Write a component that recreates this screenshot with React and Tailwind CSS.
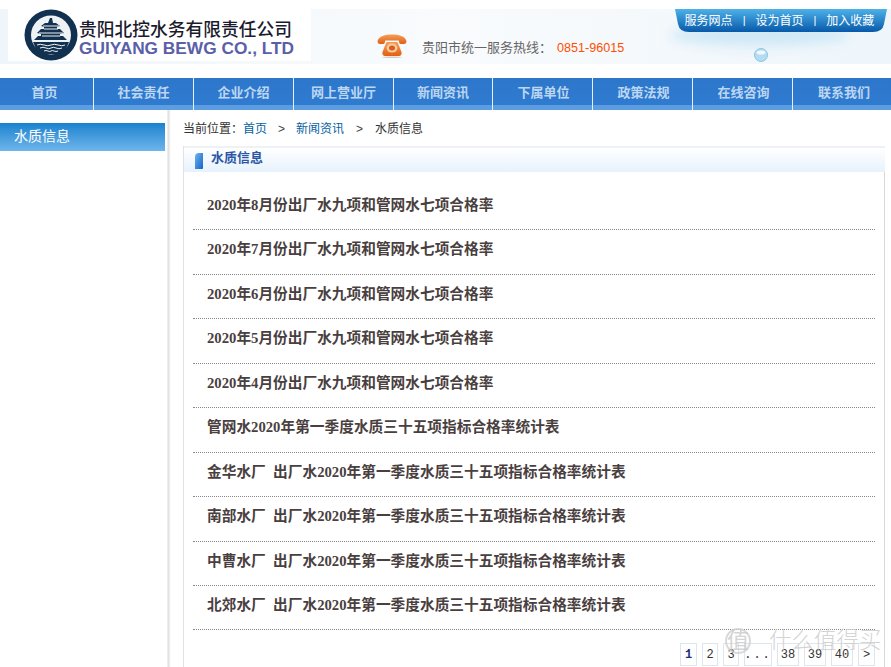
const nav = ["首页","社会责任","企业介绍","网上营业厅","新闻资讯","下属单位","政策法规","在线咨询","联系我们"];
const navWidths = [
  "w-[94px] pr-[4px]",
  "w-[100px]",
  "w-[100px]",
  "w-[100px]",
  "w-[99px]",
  "w-[100px] pl-[2px]",
  "w-[100px] pl-[2px]",
  "w-[100px] pl-[2px]",
  "w-[100px] pl-[2px]",
];
const rows = [
  "2020年8月份出厂水九项和管网水七项合格率",
  "2020年7月份出厂水九项和管网水七项合格率",
  "2020年6月份出厂水九项和管网水七项合格率",
  "2020年5月份出厂水九项和管网水七项合格率",
  "2020年4月份出厂水九项和管网水七项合格率",
  "管网水2020年第一季度水质三十五项指标合格率统计表",
  "金华水厂  出厂水2020年第一季度水质三十五项指标合格率统计表",
  "南部水厂  出厂水2020年第一季度水质三十五项指标合格率统计表",
  "中曹水厂  出厂水2020年第一季度水质三十五项指标合格率统计表",
  "北郊水厂  出厂水2020年第一季度水质三十五项指标合格率统计表",
];
const pages = [
  ["1", "w-[17px] font-bold text-[#1f2f80]"],
  ["2", "w-[16px] text-[#333]"],
  ["3", "w-[16px] text-[#333]"],
  ["...", "w-[28px] text-[#333] tracking-[2px]"],
  ["38", "w-[22px] text-[#333]"],
  ["39", "w-[22px] text-[#333]"],
  ["40", "w-[22px] text-[#333]"],
  [">", "w-[17px] text-[#333]"],
];
const font = { fontFamily: '"Liberation Sans","Noto Sans CJK SC",sans-serif' };
const rowFont = { fontFamily: '"Liberation Serif","Noto Sans CJK SC",serif' };
const monoFont = { fontFamily: '"Liberation Mono","Noto Sans CJK SC",monospace' };

function Logo() {
  return (
    <svg width="54" height="52" viewBox="0 0 54 52" className="shrink-0">
      <ellipse cx="27" cy="26" rx="26.5" ry="25.5" fill="#12304f" />
      <ellipse cx="27" cy="26" rx="20" ry="19.5" fill="#eef2f5" />
      <path d="M26 9h2l1 5h3l4 3-3 1v2h3l4 4-4 1v2h3l4 4H10l4-4h3v-2l-4-1 4-4h3v-2l-3-1 4-3h3z" fill="#12304f" />
      <path d="M19 17h16M15 24h24M20 20h14M18 27h18" stroke="#eef2f5" strokeWidth="1" />
      <path d="M9 33h36l-3 7-6 5H18l-6-5z" fill="#12304f" />
      <path d="M13 36q3-1.5 7 0t7 0 7 0 7 0M16 39q3-1.5 6 0t5 0 5 0 6 0M20 42q2-1 4 0t3 0 3 0 4 0" stroke="#eef2f5" strokeWidth="1" fill="none" />
    </svg>
  );
}

function Phone() {
  return (
    <svg width="30" height="24" viewBox="0 0 30 24">
      <defs>
        <linearGradient id="ph" x1="0" y1="0" x2="0" y2="1">
          <stop offset="0" stopColor="#f4a05a" />
          <stop offset="1" stopColor="#e25f12" />
        </linearGradient>
      </defs>
      <path d="M0.5 7C2 2 8 0.5 15 0.5S28 2 29.5 7c0 2-1 3-2.5 3h-3c-2 0-2-2-2.2-3.5H8.2C8 8 8 10 6 10H3C1.5 10 .5 9 .5 7z" fill="url(#ph)" />
      <path d="M9.5 8h11l4 10c.5 3-1 4-3 4H8.5c-2 0-3.500-1-3-4z" fill="url(#ph)" />
      <ellipse cx="15" cy="14" rx="5.500" ry="4.500" fill="#f8c8a0" />
      <ellipse cx="15" cy="14" rx="3" ry="2.500" fill="#d9601c" />
      <ellipse cx="15" cy="23.300" rx="10" ry="0.700" fill="#d9c8b8" />
    </svg>
  );
}

function TopTab() {
  return (
    <svg width="212" height="23" viewBox="0 0 212 23" className="absolute inset-0">
      <defs>
        <linearGradient id="tab" x1="0" y1="0" x2="0" y2="1">
          <stop offset="0" stopColor="#4db1e9" />
          <stop offset="1" stopColor="#0759a9" />
        </linearGradient>
      </defs>
      <path d="M0 0H212L209 15Q207.500 23 198 23H14Q4.500 23 3 15Z" fill="url(#tab)" />
    </svg>
  );
}

export default function App() {
  return (
    <div className="relative w-[891px] h-[667px] overflow-hidden bg-white text-[12px]" style={font}>
      <header className="mt-[9px] h-[55px] flex relative overflow-hidden bg-gradient-to-r from-[#eef6fb] via-[#f9fbfd] to-[#eef6fb]">
        <div className="absolute left-[670px] top-[15px] w-[180px] h-[22px] rounded-[50%] bg-[#cfe8f6] blur-[6px]" />
        <div className="relative ml-[8px] w-[303px] h-[52px] bg-white flex items-center pl-[16px] gap-[1px]">
          <Logo />
          <div className="flex flex-col leading-none mt-[9px]">
            <span className="text-[17.75px] font-medium text-[#1b1b2e] whitespace-nowrap">贵阳北控水务有限责任公司</span>
            <span className="text-[17.300px] font-bold text-[#5a60a8] whitespace-nowrap">GUIYANG BEWG CO., LTD</span>
          </div>
        </div>
        <div className="relative ml-[66px] mt-[25px] flex items-start">
          <Phone />
          <div className="ml-[15px] mt-[5px] text-[13px] leading-[18px] text-[#666] whitespace-nowrap">
            贵阳市统一服务热线：<span className="ml-[5px] text-[12.600px] text-[#ff4e00]">0851-96015</span>
          </div>
        </div>
        <div className="absolute left-[675px] top-0 w-[212px] h-[23px] pr-[3px] flex items-center justify-center text-white text-[12px] whitespace-nowrap">
          <TopTab />
          <span className="relative">服务网点</span><span className="relative mx-[10px] text-[11px] font-light">|</span>
          <span className="relative">设为首页</span><span className="relative mx-[10px] text-[11px] font-light">|</span>
          <span className="relative">加入收藏</span>
        </div>
        <svg width="20" height="20" viewBox="0 0 20 20" className="absolute left-[750px] top-[37px]">
          <ellipse cx="11" cy="9" rx="6.500" ry="6.500" fill="#b5dcf0" stroke="#8cc6e4" />
          <ellipse cx="11" cy="6.500" rx="4.500" ry="2" fill="#eef8fd" />
        </svg>
      </header>

      <nav className="mt-[14px] h-[32px] flex overflow-hidden bg-[linear-gradient(#2d77cb_0,#2f7bd0_27px,#5c9ce1_27px,#5c9ce1_100%)]">
        {nav.map((n, i) => (
          <div
            key={n}
            className={`shrink-0 flex items-start justify-center pt-[6px] text-[13px] font-bold leading-[18px] text-[#bcd6f2] ${navWidths[i]} ${i < 8 ? "border-r border-r-[#e6f0fb]" : ""}`}
          >
            {n}
          </div>
        ))}
      </nav>

      <div className="flex h-[557px]">
        <aside className="w-[171px] shrink-0 pt-[13px] pr-[6px] bg-[linear-gradient(90deg,transparent_0,transparent_167px,#dcdcdc_168px,#e8e8e8_169px,#f6f6f6_170px,transparent_171px)]">
          <div className="h-[28px] pl-[14px] text-[14px] leading-[27px] text-white bg-gradient-to-b from-[#1682cf] to-[#6cb6ea]">水质信息</div>
        </aside>
        <main className="ml-[12px] w-[702px]">
          <div className="mt-[12px] h-[14px] flex items-center text-[12px] leading-[14px] text-[#333] whitespace-nowrap">
            <span>当前位置：</span>
            <span className="text-[#05609f]">首页</span>
            <span className="mx-[11px] text-[12px] text-[#444]">&gt;</span>
            <span className="text-[#05609f]">新闻资讯</span>
            <span className="mx-[12px] text-[12px] text-[#444]">&gt;</span>
            <span>水质信息</span>
          </div>
          <section className="mt-[10px] h-[521px] border-l border-l-[#dfe3e8] border-r border-r-[#d4d7dc]">
            <div className="h-[26px] -mr-[1px] border-t-2 border-t-[#eef1f6] pl-[11px] flex items-center gap-[8px] bg-gradient-to-b from-[#ffffff] to-[#e6f2fd]">
              <span className="w-[8px] h-[16px] mt-[1px] rounded-tl-[4px] rounded-br-[1px] bg-gradient-to-br from-[#6eb2ee] to-[#0a64c6]" />
              <span className="text-[13px] font-bold leading-[14px] mb-[4px] text-[#2d57a6]">水质信息</span>
            </div>
            <ul className="mx-[9px] pt-[14px]">
              {rows.map((r) => (
                <li key={r} style={rowFont} className="h-[44.440px] pl-[14px] border-b border-dotted border-b-[#888] text-[14.700px] font-bold leading-[39px] text-[#4a3f3f] whitespace-pre-wrap">
                  {r}
                </li>
              ))}
            </ul>
            <div className="flex justify-end gap-[5px] mt-[13px] mr-[9px]" style={monoFont}>
              {pages.map(([p, cls]) => (
                <span key={p} className={`h-[23px] flex items-center justify-center border border-[#dde6ee] text-[12px] ${cls}`}>
                  {p}
                </span>
              ))}
            </div>
          </section>
        </main>
      </div>

      <div className="absolute left-[725px] top-[628px] flex items-center gap-[18px] text-[#c8c8c8]/80 pointer-events-none whitespace-nowrap">
        <span className="w-[26px] h-[26px] rounded-full border-2 border-[#cfcfcf]/80 flex items-center justify-center text-[22px] leading-none">值</span>
        <span className="text-[22.500px] leading-none font-light">什么值得买</span>
      </div>
    </div>
  );
}
